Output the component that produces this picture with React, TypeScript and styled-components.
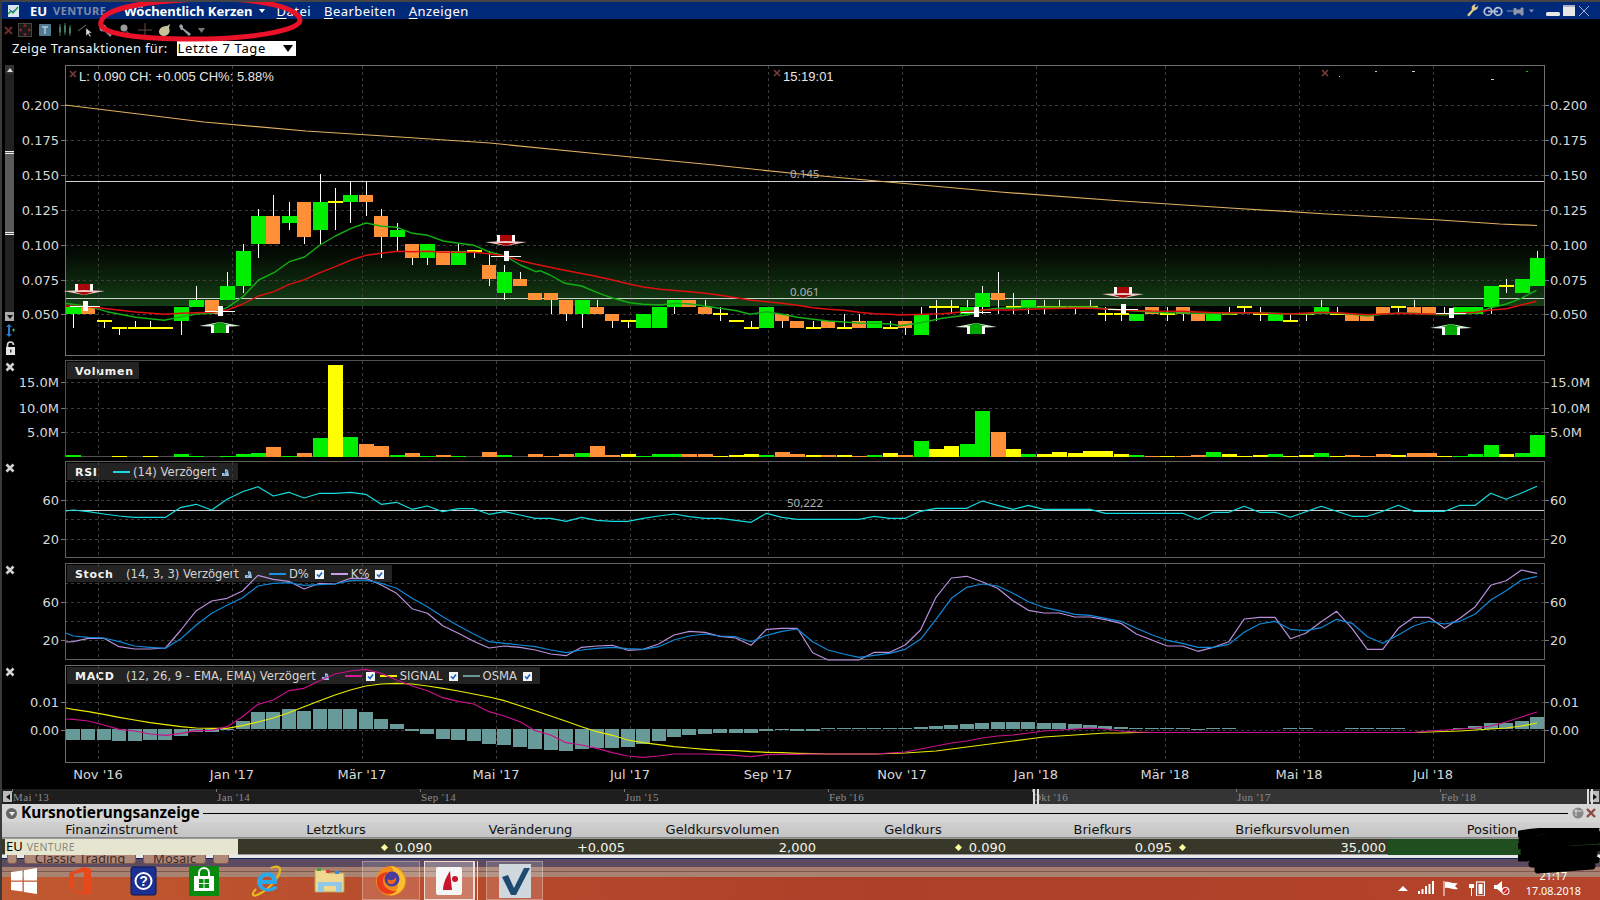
import React from 'react';
import styled, { createGlobalStyle } from 'styled-components';

const UI_FONT = '"Noto Sans", "DejaVu Sans", sans-serif';
const NUM_FONT = '"DejaVu Sans", "Liberation Sans", sans-serif';

const GlobalStyle = createGlobalStyle`
  html, body { margin: 0; padding: 0; background: #000; }
  * { box-sizing: border-box; }
`;

/* ---------- chart data ---------- */

type Kind = 'g' | 'o' | 'y';
type Candle = { k: Kind; t: number; b: number; h: number; l: number };
const c = (k: Kind, t: number, b = t, h = t, l = b): Candle => ({ k, t, b, h, l });

const CANDLES: Candle[] = [
  c('g', .055, .05, .055, .04), c('o', .055, .05), c('y', .045, .045, .045, .04), c('y', .04, .04, .04, .035),
  c('y', .04, .04, .045, .04), c('y', .04, .04, .045, .04), c('y', .04), c('g', .055, .045, .055, .035),
  c('g', .06, .055, .07, .055), c('o', .06, .05), c('g', .07, .06, .08, .06), c('g', .095, .07, .1, .065),
  c('g', .12, .1, .125, .09), c('o', .12, .1, .135, .1), c('g', .12, .115, .13, .11), c('o', .13, .105, .13, .1),
  c('g', .13, .11, .15, .1), c('y', .13, .13, .14, .11), c('g', .135, .13, .145, .115), c('o', .135, .13, .145, .12),
  c('o', .12, .105, .125, .09), c('g', .11, .105, .115, .095), c('o', .1, .09, .1, .085), c('g', .1, .09, .1, .085),
  c('o', .095, .085), c('g', .095, .085, .1, .085), c('y', .095, .095, .095, .09), c('o', .085, .075, .095, .07),
  c('g', .08, .065, .085, .06), c('o', .075, .07, .08, .07), c('o', .065, .06), c('o', .065, .06, .065, .05),
  c('o', .06, .05, .06, .045), c('g', .06, .05, .06, .04), c('o', .055, .05, .06, .05), c('o', .05, .045, .05, .04),
  c('y', .045, .045, .045, .04), c('g', .05, .04), c('g', .055, .04), c('g', .06, .055, .06, .05),
  c('o', .06, .055), c('o', .055, .05, .06, .05), c('y', .05, .05, .055, .045), c('y', .045),
  c('y', .04, .04, .045, .04), c('g', .055, .04), c('o', .05, .045, .05, .04), c('o', .045, .04),
  c('y', .04, .04, .045, .04), c('o', .045, .04), c('y', .04, .04, .05, .04), c('o', .045, .04, .05, .04),
  c('g', .045, .04), c('y', .04, .04, .045, .04), c('o', .045, .04, .045, .035), c('g', .05, .035, .055, .035),
  c('y', .055, .055, .06, .045), c('y', .055, .055, .06, .05), c('g', .055, .05, .06, .05), c('g', .065, .055, .07, .05),
  c('o', .065, .06, .08, .05), c('y', .055, .055, .065, .05), c('g', .06, .055, .06, .05), c('y', .055, .055, .06, .05),
  c('y', .055, .055, .06, .055), c('y', .055, .055, .055, .05), c('y', .055, .055, .06, .055), c('y', .05, .05, .055, .045),
  c('y', .05, .05, .05, .045), c('g', .05, .045), c('o', .055, .05), c('y', .05, .05, .055, .045),
  c('o', .055, .05, .055, .045), c('o', .05, .045), c('g', .05, .045), c('y', .05, .05, .055, .05),
  c('y', .055, .055, .055, .05), c('y', .05, .05, .055, .045), c('g', .05, .045), c('y', .045, .045, .05, .045),
  c('y', .05, .05, .05, .045), c('g', .055, .05, .06, .05), c('y', .05, .05, .055, .05), c('o', .05, .045),
  c('o', .05, .045), c('o', .055, .05), c('y', .055, .055, .055, .05), c('o', .055, .05, .06, .05),
  c('o', .055, .05), c('y', .05, .05, .055, .05), c('g', .055, .05), c('g', .055, .05),
  c('g', .07, .055, .07, .05), c('y', .07, .07, .075, .065), c('g', .075, .065), c('g', .09, .07, .095, .07),
];

const VOLUME = [
  2, 0, 0, .7, 0, .7, 0, 3, .7, 0, .7, 3, 4, 10, 1, 4, 19, 92, 20, 13, 11, 2, 4, 1, 2, 1, 0, 5, 2, 0, 3, 1,
  3, 4, 11, 2, 3, .7, 3, 3, 3, 3, .7, 2, 3, 2, 5, 3, 2, 2, 2, 1, 2, 4, 2, 16, 8, 11, 13, 46, 25, 8, 3, 3,
  5, 4, 6, 6, 3, 2, 1, .7, 1, 2, 5, 3, .7, 2, 3, 1, 2, 4, 1, 2, 1, 3, 2, 4, 4, 1, .7, 3, 12, 3, 4, 22,
];

const RSI = [
  ...[450, 455, 462, 468, 472, 472, 472, 442, 433, 450, 418, 395, 380, 408, 397, 414, 400, 400, 397, 403, 433, 427, 448, 438, 455, 446, 446, 463].map(z => 360 + z / 3),
  ...[155, 165, 175, 175, 184, 172, 181, 184, 184, 175, 168, 162, 170, 175, 175, 181, 187, 160, 172, 178, 178, 178, 178, 178,
    169, 175, 175, 154, 145, 145, 145, 123, 136, 148, 136, 148, 148, 148, 148, 160, 160, 160, 160, 160, 160, 178, 157, 157, 139, 157, 157, 172, 155, 139, 154, 169, 169, 154, 136, 154, 154, 154, 136, 136, 100, 118, 99, 79].map(z => 460 + z / 3),
];

const STOCH_K = [
  ...[245, 235, 235, 260, 267, 267, 264, 210, 152, 123, 115, 93, 46, 58, 64, 87, 70, 72, 55, 55, 75, 100, 146, 160, 197, 220, 244, 264, 258, 262, 270, 282, 287, 262, 258, 256, 271, 268, 252, 225, 214, 217, 229, 234, 256, 208, 205, 205].map(z => 560 + z / 3),
  ...[578, 600, 600, 600, 577, 577, 555, 510, 412, 354, 349, 365, 385, 422, 451, 459, 459, 471, 471, 479, 490, 522, 540, 558, 558, 574, 562, 545, 477, 472, 472, 536, 520, 485, 454, 505, 568, 568, 505, 472, 472, 505, 475, 440, 376, 362, 330, 340].map(z => 460 + z / 3),
];

const STOCH_D = [
  ...[228, 232, 234, 245, 258, 262, 265, 236, 195, 160, 136, 113, 78, 70, 68, 76, 74, 72, 62, 60, 70, 85, 115, 140, 170, 197, 222, 245, 250, 255, 260, 270, 278, 270, 265, 262, 266, 268, 260, 240, 228, 222, 228, 230, 245, 226, 214, 207].map(z => 560 + z / 3),
  ...[545, 570, 582, 592, 586, 580, 568, 538, 478, 415, 382, 372, 378, 400, 425, 442, 452, 463, 466, 475, 484, 505, 524, 541, 550, 562, 562, 553, 517, 492, 484, 508, 512, 503, 478, 490, 530, 550, 525, 498, 484, 492, 484, 462, 420, 392, 360, 349].map(z => 460 + z / 3),
];

const FLAT = Array(18).fill(732.5);
const MACD_LINE = [
  ...[478, 483, 495, 508, 513, 522, 526, 520, 512, 511, 500, 470, 433, 420, 392, 385, 362, 342, 333, 328, 340, 360, 378, 392, 413, 424, 432, 455, 468, 485, 512, 525, 548, 555, 565, 578, 588, 592, 588, 582, 582, 582, 583, 586, 590, 584, 583, 583, 582].map(z => 560 + z / 3),
  754, 754, 754, 754, 753, 752, 749, 746, 743, 741, 738, 736, 735, 733, 731, 730, 729, 728, 729, 731, 732,
  ...FLAT, 731, 730, 729, 728, 726, 722, 717, 712,
];
const MACD_SIGNAL = [
  ...[448, 455, 463, 472, 480, 488, 494, 500, 504, 505, 505, 497, 486, 474, 458, 440, 422, 405, 390, 378, 372, 370, 372, 378, 385, 393, 402, 411, 422, 437, 452, 468, 484, 500, 515, 526, 540, 548, 554, 560, 564, 568, 571, 572, 575, 577, 578, 580, 581].map(z => 560 + z / 3),
  754, 754, 754, 754, 753.5, 753, 752, 751, 749, 747, 745, 743, 741, 739, 737, 736, 735, 734, 733, 733, 732.5,
  ...FLAT, 732, 731.5, 731, 730, 729, 728, 726, 723,
];
const OSMA = [
  ...[540, 540, 540, 543, 543, 540, 540, 528, 517, 517, 509, 483, 456, 456, 447, 453, 447, 447, 447, 456, 477, 492, 513, 522, 537, 540, 543, 552, 555, 561, 567, 570, 573, 567, 564, 564, 561, 552, 543, 531, 525, 522, 519, 519, 519, 513, 510, 513, 513].map(z => (507 - z) / 3),
  .7, .7, .7, 1, 1, 1, 2, 3, 4, 5, 6, 7, 7, 7, 6.5, 6, 5, 4, 3, 2, .7, .7, 1, 1, -1, .7, .7, 0, 0, 0, .7, .7, 0, 0, .7, .7, .7, 1.5, 0, 0, 0, 1, 3, 6, 6, 8, 12,
];

type Pt = [number, number];
const mapPts = (pts: Pt[], x0: number, y0: number, sx: number): Pt[] => pts.map(([x, y]) => [x0 + x / sx, y0 + y / 3]);

const SMA_FAST: Pt[] = [
  ...mapPts([[183, 460], [250, 470], [300, 485], [380, 502], [460, 511], [508, 500], [550, 492], [594, 490], [637, 472], [680, 440], [724, 390], [767, 368], [810, 335], [853, 321], [896, 285], [939, 258], [983, 235], [1025, 219], [1068, 229], [1112, 232], [1155, 250], [1198, 256], [1241, 273], [1284, 280], [1327, 286], [1371, 306], [1414, 318], [1457, 345], [1500, 365]], 0, 150, 2.8),
  ...mapPts([[0, 2], [30, 15], [75, 40], [125, 48], [170, 67], [220, 85], [270, 98], [310, 103], [360, 105], [410, 100], [450, 102], [495, 108], [540, 115], [590, 122], [630, 133], [680, 125], [726, 133], [772, 142], [819, 148], [865, 153], [912, 156], [957, 159], [1003, 160], [1050, 162]], 540, 270, 3),
  ...mapPts([[0, 287], [50, 278], [100, 265], [160, 255], [196, 240], [233, 235], [269, 234], [342, 232], [416, 231], [452, 231], [490, 236], [526, 240], [562, 243], [598, 246], [635, 248], [672, 249], [745, 250], [782, 252], [818, 248], [855, 248], [892, 250], [928, 252], [965, 252], [1001, 250], [1038, 250], [1075, 253], [1110, 258], [1147, 253], [1184, 250], [1221, 250], [1257, 253], [1294, 254], [1331, 252], [1367, 250], [1404, 233], [1441, 222], [1476, 205], [1512, 181]], 900, 230, 2.376),
];
const SMA_SLOW: Pt[] = [
  ...mapPts([[183, 468], [250, 470], [300, 476], [380, 486], [460, 493], [508, 490], [550, 488], [594, 487], [637, 480], [680, 462], [724, 438], [767, 425], [810, 403], [853, 389], [896, 368], [939, 350], [983, 330], [1025, 316], [1068, 310], [1112, 304], [1155, 305], [1198, 304], [1241, 307], [1284, 307], [1327, 307], [1371, 311], [1414, 318], [1457, 332], [1500, 343]], 0, 150, 2.8),
  ...mapPts([[70, 0], [160, 17], [218, 30], [270, 43], [310, 51], [360, 58], [450, 65], [495, 70], [541, 76], [588, 83], [634, 91], [680, 95], [726, 100], [772, 106], [819, 113], [865, 118], [912, 121], [957, 127], [1003, 131], [1050, 133]], 540, 270, 3),
  ...mapPts([[0, 255], [100, 251], [196, 240], [233, 240], [269, 240], [342, 236], [416, 234], [452, 235], [526, 240], [598, 243], [672, 244], [745, 248], [818, 248], [855, 249], [928, 252], [1001, 247], [1038, 248], [1110, 254], [1184, 250], [1257, 252], [1294, 251], [1367, 247], [1404, 240], [1441, 236], [1476, 225], [1512, 214]], 900, 230, 2.376),
];
const SMA_LONG: Pt[] = [[65, 105], [204, 122], [306, 131], [400, 137], [490, 143], [600, 154], [714, 165], [800, 174], [888, 182], [1000, 192], [1122, 201], [1230, 208], [1327, 214], [1440, 220], [1500, 224], [1537, 225.5]];

const MONTHS: [number, string][] = [
  [98, "Nov '16"], [232, "Jan '17"], [362, "Mär '17"], [496, "Mai '17"], [630, "Jul '17"], [768, "Sep '17"],
  [902, "Nov '17"], [1036, "Jan '18"], [1165, "Mär '18"], [1299, "Mai '18"], [1433, "Jul '18"],
];

const SLIDER_LABELS = ["Mai '13", "Jan '14", "Sep '14", "Jun '15", "Feb '16", "Okt '16", "Jun '17", "Feb '18"];

const COLORS: Record<Kind, string> = { g: '#00ee00', o: '#ff9038', y: '#ffff00' };
const xAt = (i: number) => 73 + 15.41 * i;
const yPrice = (p: number) => 314 - (p - 0.05) * 1396;
const toPoints = (pts: Pt[]) => pts.map(([x, y]) => `${x.toFixed(1)},${y.toFixed(1)}`).join(' ');
const series = (ys: number[]): Pt[] => ys.map((y, i) => [xAt(i), y]);

/* ---------- layout ---------- */

const Page = styled.div`
  position: relative;
  width: 1600px;
  height: 900px;
  overflow: hidden;
  background: #000;
  border-top: 2px solid #444;
  border-left: 2px solid #3a3a3a;
  font-family: ${UI_FONT};
`;

const TitleBar = styled.div`
  display: flex;
  align-items: center;
  height: 17px;
  margin-bottom: 1px;
  background: #00297a;
  color: #fff;
  font-size: 13px;
`;

const TitleLeft = styled.div`
  display: flex;
  align-items: center;
  width: 122px;
  padding-left: 6px;
`;

const Symbol = styled.span`
  margin-left: 11px;
  font-weight: 700;
`;

const Exchange = styled.span`
  margin-left: 6px;
  font-size: 11px;
  font-weight: 700;
  color: #7f8aa8;
  letter-spacing: 0.4px;
`;

const ChartTitle = styled.span`
  font-weight: 700;
`;

const MenuCaret = styled.span`
  width: 0;
  height: 0;
  margin: 0 12px 0 6px;
  border-left: 3.5px solid transparent;
  border-right: 3.5px solid transparent;
  border-top: 4px solid #fff;
`;

const MenuItem = styled.span`
  margin-right: 13px;
  letter-spacing: 0.45px;

  u { text-underline-offset: 2px; }
`;

const TitleRight = styled.div`
  display: flex;
  align-items: center;
  margin-left: auto;
  padding-right: 7px;
`;

const Toolbar = styled.div`
  display: flex;
  align-items: center;
  height: 20px;
`;

const ToolSlot = styled.div<{ $w?: number }>`
  display: flex;
  align-items: center;
  justify-content: center;
  width: ${p => p.$w ?? 20}px;
  height: 20px;
`;

const FilterRow = styled.div`
  display: flex;
  align-items: center;
  height: 16px;
  padding-left: 10px;
  color: #f0f0f0;
  font-size: 13px;
  letter-spacing: 0.3px;
`;

const FilterSelect = styled.div`
  display: flex;
  align-items: center;
  justify-content: space-between;
  width: 119px;
  height: 15px;
  margin-left: 9px;
  padding: 0 3px 0 1px;
  background: #fff;
  color: #000;
  letter-spacing: 0.65px;
`;

const SelectCaret = styled.span`
  width: 0;
  height: 0;
  border-left: 5px solid transparent;
  border-right: 5px solid transparent;
  border-top: 7px solid #000;
`;

const ChartStack = styled.div`
  display: flex;
  flex-direction: column;
  gap: 4px;
  margin-top: 9px;
`;

const Panel = styled.section<{ $h: number }>`
  position: relative;
  width: 1598px;
  height: ${p => p.$h}px;
`;

const PlotSvg = styled.svg`
  position: relative;
  z-index: 1;
  display: block;
  width: 100%;
  height: 100%;
`;

const AxisText = styled.text`
  font-family: ${NUM_FONT};
  font-size: 13px;
  fill: #d8d8d8;
`;

const FloatText = styled.text`
  font-family: ${UI_FONT};
  font-size: 11.5px;
  fill: #b0b0b0;
`;

const ReadoutText = styled.text`
  font-family: "Liberation Sans", Arial, sans-serif;
  font-size: 13px;
  fill: #e6e6e6;
`;

const CloseMark = styled.svg`
  position: absolute;
  z-index: 2;
  left: 3px;
  top: 2px;
  width: 10px;
  height: 10px;
`;

const Legend = styled.div`
  position: absolute;
  z-index: 0;
  left: 65px;
  top: 2px;
  display: flex;
  align-items: center;
  height: 17px;
  padding: 1px 8px 0;
  background: #232323;
  color: #d4d4d4;
  font-family: ${NUM_FONT};
  font-size: 11.6px;
`;

const LegendName = styled.b<{ $w: number }>`
  width: ${p => p.$w}px;
  color: #f2f2f2;
  font-size: 11px;
  letter-spacing: 0.7px;
`;

const LegendDash = styled.i<{ $color: string; $ml?: number }>`
  display: block;
  width: 17px;
  height: 2px;
  margin: 0 3px 0 ${p => p.$ml ?? 5}px;
  background: ${p => p.$color};
`;

const LegendCheck = styled.svg<{ $ml?: number }>`
  width: 9px;
  height: 9px;
  margin-left: ${p => p.$ml ?? 6}px;
`;

const LegendGear = styled.svg`
  width: 9px;
  height: 9px;
  margin-left: 5px;
`;

const ScrollRail = styled.div`
  position: absolute;
  z-index: 2;
  left: 3px;
  top: 0;
  display: flex;
  flex-direction: column;
  align-items: center;
  width: 9px;
  height: 256px;
  background: #222;
`;

const RailButton = styled.div<{ $down?: boolean }>`
  display: flex;
  align-items: center;
  justify-content: center;
  width: 9px;
  height: 9px;
  background: ${p => (p.$down ? '#aaa' : '#333')};

  &::after {
    content: '';
    border-left: 3px solid transparent;
    border-right: 3px solid transparent;
    ${p => (p.$down ? 'border-top: 4px solid #111;' : 'border-bottom: 4px solid #ddd;')}
  }
`;

const RailThumb = styled.div`
  width: 9px;
  height: 84px;
  margin-top: 77px;
  margin-bottom: auto;
  background: #5a5a5a;
  border-top: 3px double #eee;
  border-bottom: 3px double #eee;
`;

const RailExtras = styled.div`
  position: absolute;
  z-index: 2;
  left: 2px;
  top: 258px;
  display: flex;
  flex-direction: column;
  align-items: center;
  gap: 3px;
  width: 12px;
`;

const TimeAxis = styled.svg`
  display: block;
  width: 1598px;
  height: 26px;
`;

const Slider = styled.div`
  position: relative;
  display: grid;
  grid-template-columns: 10px repeat(8, 204px);
  height: 15px;
  color: #8c8c8c;
  background: linear-gradient(90deg, #1e1e1e 0, #1e1e1e 1033px, #343434 1033px, #343434 100%);
  font-family: "Liberation Serif", serif;
  font-size: 11px;
  line-height: 17px;
`;

const SliderLabel = styled.span`
  position: relative;
  padding-left: 1px;
  letter-spacing: 0.4px;
  white-space: nowrap;

  &::before {
    content: '';
    position: absolute;
    left: 0;
    top: 0;
    width: 1px;
    height: 3px;
    background: #777;
  }
`;

const SliderArrow = styled.i<{ $right?: boolean }>`
  position: absolute;
  top: 2px;
  ${p => (p.$right ? 'right: 1px;' : 'left: 1px;')}
  display: flex;
  align-items: center;
  justify-content: center;
  width: 9px;
  height: 11px;
  background: #bbb;

  &::after {
    content: '';
    border-top: 3px solid transparent;
    border-bottom: 3px solid transparent;
    ${p => (p.$right ? 'border-left: 4px solid #111;' : 'border-right: 4px solid #111;')}
  }
`;

const SliderHandle = styled.i<{ $left: number }>`
  position: absolute;
  top: 0;
  left: ${p => p.$left}px;
  width: 6px;
  height: 15px;
  border-left: 2px solid #ddd;
  border-right: 2px solid #ddd;
`;

const QuotePanel = styled.section`
  height: 51px;
  background: #d6d6d6;
`;

const QuoteTitle = styled.div`
  display: flex;
  align-items: center;
  height: 18px;
  padding: 0 3px 0 4px;
  color: #000;
`;

const CollapseDot = styled.span`
  display: flex;
  align-items: center;
  justify-content: center;
  width: 11px;
  height: 11px;
  margin-right: 4px;
  border-radius: 50%;
  background: #666;

  &::after {
    content: '';
    margin-top: 2px;
    border-left: 3px solid transparent;
    border-right: 3px solid transparent;
    border-top: 4px solid #eee;
  }
`;

const QuoteHeading = styled.h2`
  margin: 0 0 1px;
  font-family: ${UI_FONT};
  font-size: 15.4px;
  font-weight: 700;
  line-height: 16px;
  white-space: nowrap;
`;

const TitleRule = styled.div`
  flex: 1;
  height: 1px;
  margin: 0 3px;
  background: #000;
`;

const QuoteRow = styled.div`
  display: grid;
  grid-template-columns: 233px 196px 193px 191px 190px 189px 191px 208px;
  padding-left: 3px;
`;

const HeaderRow = styled(QuoteRow)`
  height: 16px;
  background: linear-gradient(#d0d0d0, #c4c4c4);
  border-bottom: 1px solid #888;
`;

const HeaderCell = styled.div`
  color: #111;
  font-family: ${NUM_FONT};
  font-size: 13px;
  line-height: 15px;
  text-align: center;
`;

const DataRow = styled(QuoteRow)`
  height: 17px;
  background: #38382a;
  border-top: 1px solid #999;
  border-bottom: 1px solid #999;
`;

const NameCell = styled.div`
  padding-left: 1px;
  background: #e6e6d0;
  color: #000;
  font-family: ${UI_FONT};
  font-size: 13px;
  line-height: 15px;
`;

const NameExchange = styled.span`
  margin-left: 4px;
  color: #8a8a7a;
  font-size: 10.5px;
  letter-spacing: 0.3px;
`;

const DataCell = styled.div<{ $pr?: number; $bg?: string }>`
  display: flex;
  align-items: center;
  justify-content: flex-end;
  gap: 8px;
  padding-right: ${p => p.$pr ?? 2}px;
  background: ${p => p.$bg ?? 'transparent'};
  color: #f4f4e8;
  font-family: ${NUM_FONT};
  font-size: 13px;
  line-height: 15px;
`;

const Diamond = styled.i`
  width: 5px;
  height: 5px;
  background: #ffffa0;
  transform: rotate(45deg);
`;

const WindowEdge = styled.div`
  height: 5px;
  background: linear-gradient(#e8e8e8 0, #e8e8e8 3px, #12245c 3px, #12245c 4px, #5c4a60 4px);
`;

const Taskbar = styled.footer`
  position: relative;
  display: flex;
  height: 40px;
  background:
    linear-gradient(#5c4a60 0, #5c4a60 7px, #a87f6e 7px, #a87f6e 11px, #7c5a4c 11px, #7c5a4c 12px, #a98372 12px, #a98372 17px, transparent 17px),
    linear-gradient(90deg, #c05a30, #b84c2c 25%, #ae3f29 55%, #b4442a);
`;

const WindowTabs = styled.div`
  position: absolute;
  left: 5px;
  top: -5px;
  display: flex;
  gap: 7px;
  height: 9px;
  overflow: hidden;
  color: #3a2a28;
  font-family: ${UI_FONT};
  font-size: 13px;
  line-height: 6px;
`;

const WindowTab = styled.span<{ $w: number }>`
  width: ${p => p.$w}px;
  background: #b08878;
  border: 1px solid #7a5c50;
  border-top: 0;
  border-radius: 0 0 3px 3px;
  text-align: center;
`;

const TaskSlot = styled.div<{ $w: number; $state?: 'open' | 'active'; $ml?: number }>`
  display: flex;
  align-items: center;
  justify-content: center;
  width: ${p => p.$w}px;
  height: 39px;
  margin-top: 1px;
  margin-left: ${p => p.$ml ?? 0}px;
  ${p => p.$state === 'open' && 'border: 1px solid rgba(255,255,255,.3); background: rgba(255,255,255,.14);'}
  ${p => p.$state === 'active' && 'border: 1px solid #f0dcd4; background: rgba(255,255,255,.28);'}
`;

const StackEdge = styled.i`
  width: 4px;
  height: 39px;
  margin-top: 1px;
  border-right: 1px solid #f0dcd4;
  border-left: 1px solid #f0dcd4;
`;

const Tray = styled.div`
  display: flex;
  align-items: center;
  margin-left: auto;
  padding: 15px 19px 0 0;
  color: #fff;
`;

const TrayIcon = styled.svg<{ $w: number }>`
  display: block;
  width: ${p => p.$w}px;
  height: 16px;
  margin-right: 9.5px;
`;

const Clock = styled.div`
  display: flex;
  flex-direction: column;
  align-items: center;
  margin-left: 6px;
  margin-top: -10px;
  font-family: ${UI_FONT};
  font-size: 10.8px;
  line-height: 15px;
`;

const Overlay = styled.svg`
  position: absolute;
  z-index: 5;
  pointer-events: none;
`;

const Ellipse = styled(Overlay)`
  left: 87px;
  top: -2px;
  width: 220px;
  height: 46px;
`;

const Scribble = styled(Overlay)`
  right: 0;
  bottom: 26px;
  width: 82px;
  height: 46px;
`;

/* ---------- small drawings ---------- */

const Grid = ({ ys, top, bottom }: { ys: number[]; top: number; bottom: number }) => (
  <g stroke="#3c3c3c" strokeWidth="1" strokeDasharray="3 3" shapeRendering="crispEdges">
    {MONTHS.map(([x]) => <line key={x} x1={x} x2={x} y1={top} y2={bottom} />)}
    {ys.map(y => <line key={y} x1="65" x2="1545" y1={y} y2={y} />)}
  </g>
);

const Frame = ({ top, bottom, color = '#6c6c6c' }: { top: number; bottom: number; color?: string }) => (
  <rect x="65.5" y={top + 0.5} width="1479" height={bottom - top - 1} fill="none" stroke={color} shapeRendering="crispEdges" />
);

const Ticks = ({ rows, left = true }: { rows: [number, string][]; left?: boolean }) => (
  <>
    {rows.map(([y, label]) => (
      <g key={label}>
        {left && <AxisText x="59" y={y + 5} textAnchor="end">{label}</AxisText>}
        <AxisText x="1550" y={y + 5}>{label}</AxisText>
        <line x1="61" x2="65" y1={y} y2={y} stroke="#777" shapeRendering="crispEdges" />
        <line x1="1545" x2="1549" y1={y} y2={y} stroke="#777" shapeRendering="crispEdges" />
      </g>
    ))}
  </>
);

const SmallX = ({ x, y }: { x: number; y: number }) => (
  <path d={`M${x - 3} ${y - 3}L${x + 3} ${y + 3}M${x + 3} ${y - 3}L${x - 3} ${y + 3}`} stroke="#7a3c3c" strokeWidth="1.6" />
);

const SellArrow = ({ x, y }: { x: number; y: number }) => (
  <g>
    <rect x={x - 9} y={y} width="18" height="8" fill="#fff" />
    <rect x={x - 6} y={y} width="12" height="9" fill="#a80808" />
    <polygon points={`${x - 21},${y + 7} ${x},${y + 6} ${x + 21},${y + 7} ${x},${y + 11}`} fill="#f2c8c8" />
    <polygon points={`${x - 9},${y + 8} ${x + 9},${y + 8} ${x},${y + 11}`} fill="#a80808" />
  </g>
);

const BuyArrow = ({ x, y }: { x: number; y: number }) => (
  <g>
    <polygon points={`${x - 21},${y + 4} ${x},${y} ${x + 21},${y + 4} ${x},${y + 5}`} fill="#d8f0d8" />
    <polygon points={`${x - 9},${y + 3} ${x + 9},${y + 3} ${x},${y}`} fill="#00a000" />
    <rect x={x - 9} y={y + 3} width="18" height="8" fill="#fff" />
    <rect x={x - 6} y={y + 3} width="12" height="8" fill="#00a800" />
  </g>
);

const CrossMark = ({ x, y }: { x: number; y: number }) => (
  <g fill="#fff" shapeRendering="crispEdges">
    <rect x={x - 15} y={y - 0.5} width="30" height="1" />
    <rect x={x - 2} y={y - 5} width="5" height="10" />
  </g>
);

const CloseX = () => (
  <CloseMark viewBox="0 0 10 10">
    <path d="M1.5 1.5L8.5 8.5M8.5 1.5L1.5 8.5" stroke="#d2d2d2" strokeWidth="2.6" />
  </CloseMark>
);

const Check = ({ ml }: { ml?: number }) => (
  <LegendCheck viewBox="0 0 9 9" $ml={ml}>
    <rect width="9" height="9" fill="#f4f4f4" />
    <path d="M2 4.5L4 6.5L7 2.5" fill="none" stroke="#1a62c8" strokeWidth="1.6" />
  </LegendCheck>
);

const Gear = () => (
  <LegendGear viewBox="0 0 9 9">
    <path d="M1 8L1 5L4 5L4 1L7 2L8 8Z" fill="#9cc0e0" />
    <path d="M3 7L6 3" stroke="#3a6a9a" />
  </LegendGear>
);

const TrendLine = ({ pts, color, width = 1.2 }: { pts: Pt[]; color: string; width?: number }) => (
  <polyline points={toPoints(pts)} fill="none" stroke={color} strokeWidth={width} strokeLinejoin="round" />
);

/* ---------- chart panels ---------- */

const MainChart = () => (
  <Panel $h={291}>
    <PlotSvg viewBox="2 65 1598 291">
      <defs>
        <linearGradient id="priceGlow" x1="0" x2="0" y1="0" y2="1">
          <stop offset="0" stopColor="#133a13" stopOpacity="0" />
          <stop offset="1" stopColor="#153f15" />
        </linearGradient>
      </defs>
      <rect x="66" y="240" width="1478" height="66" fill="url(#priceGlow)" />
      <Grid ys={[105, 140, 175, 210, 245, 280, 314]} top={66} bottom={355} />
      <Frame top={65} bottom={356} color="#707070" />
      <Ticks rows={[[105, '0.200'], [140, '0.175'], [175, '0.150'], [210, '0.125'], [245, '0.100'], [280, '0.075'], [314, '0.050']]} />
      <line x1="66" x2="1544" y1="181.5" y2="181.5" stroke="#d0d0d0" shapeRendering="crispEdges" />
      <line x1="66" x2="1544" y1="298.5" y2="298.5" stroke="#d0d0d0" shapeRendering="crispEdges" />
      <FloatText x="790" y="178">0.145</FloatText>
      <FloatText x="790" y="296">0.061</FloatText>
      {CANDLES.map((d, i) => {
        const x = Math.round(xAt(i));
        return (
          <g key={i} shapeRendering="crispEdges">
            <line x1={x + 0.5} x2={x + 0.5} y1={yPrice(d.h)} y2={yPrice(d.l)} stroke="#fff" />
            {d.k === 'y'
              ? <rect x={x - 7} y={yPrice(d.t) - 1} width="15" height="2" fill={COLORS.y} />
              : <rect x={x - 7} y={yPrice(d.t)} width={d.k === 'g' ? 15 : 14} height={yPrice(d.b) - yPrice(d.t)} fill={COLORS[d.k]} />}
          </g>
        );
      })}
      <TrendLine pts={SMA_LONG} color="#e0b060" />
      <TrendLine pts={SMA_FAST} color="#12b012" width={1.4} />
      <TrendLine pts={SMA_SLOW} color="#e01010" width={1.4} />
      <SellArrow x={84} y={284} />
      <SellArrow x={506} y={235} />
      <SellArrow x={1123} y={287} />
      <BuyArrow x={220} y={322} />
      <BuyArrow x={976} y={323} />
      <BuyArrow x={1451} y={324} />
      <CrossMark x={85} y={306} />
      <CrossMark x={220} y={311} />
      <CrossMark x={506} y={256} />
      <CrossMark x={976} y={312} />
      <CrossMark x={1123} y={309} />
      <CrossMark x={1451} y={313} />
      <SmallX x={73} y={74} />
      <ReadoutText x="79" y="81">L: 0.090 CH: +0.005 CH%: 5.88%</ReadoutText>
      <SmallX x={777} y={73} />
      <ReadoutText x="783" y="81">15:19:01</ReadoutText>
      <SmallX x={1325} y={73} />
      <g fill="#ccc">
        <rect x="1339" y="76" width="1" height="1" />
        <rect x="1375" y="71" width="2" height="1" />
        <rect x="1412" y="71" width="3" height="1" />
        <rect x="1491" y="79" width="3" height="1" />
        <rect x="1526" y="71" width="2" height="1" fill="#0c0" />
      </g>
    </PlotSvg>
    <ScrollRail>
      <RailButton />
      <RailThumb />
      <RailButton $down />
    </ScrollRail>
    <RailExtras>
      <svg width="10" height="15" viewBox="0 0 10 15">
        <path d="M4 1L1 4H3V11H1L4 14L7 11H5V4H7Z" fill="#2a7ad0" />
        <path d="M7 7H10M8.5 5.5V8.5" stroke="#20c080" />
      </svg>
      <svg width="11" height="14" viewBox="0 0 11 14">
        <path d="M2.5 6V4A3 3 0 0 1 8.500 4" fill="none" stroke="#ddd" strokeWidth="1.6" />
        <rect x="1" y="6" width="9" height="8" fill="#e4e4e4" />
        <rect x="5" y="8.500" width="1.500" height="3" fill="#333" />
      </svg>
    </RailExtras>
  </Panel>
);

const VolumeChart = () => (
  <Panel $h={97}>
    <Legend><LegendName $w={56}>Volumen</LegendName></Legend>
    <PlotSvg viewBox="2 360 1598 97">
      <Grid ys={[382, 408, 432]} top={361} bottom={456} />
      <Frame top={360} bottom={457} color="#505050" />
      <Ticks rows={[[382, '15.0M'], [408, '10.0M'], [432, '5.0M']]} />
      <g shapeRendering="crispEdges">
        {VOLUME.map((v, i) => v > 0 && (
          <rect key={i} x={Math.round(xAt(i)) - 7} y={456.5 - v} width="15" height={v} fill={COLORS[CANDLES[i].k]} />
        ))}
      </g>
    </PlotSvg>
    <CloseX />
  </Panel>
);

const RsiChart = () => (
  <Panel $h={98}>
    <Legend>
      <LegendName $w={28}>RSI</LegendName>
      <LegendDash $color="#19d8e0" $ml={10} />
      (14) Verzögert
      <Gear />
    </Legend>
    <PlotSvg viewBox="2 461 1598 98">
      <Grid ys={[481, 500, 519, 539]} top={462} bottom={558} />
      <Frame top={461} bottom={558} color="#606060" />
      <Ticks rows={[[500, '60'], [539, '20']]} />
      <line x1="66" x2="1544" y1="510.500" y2="510.500" stroke="#d0d0d0" shapeRendering="crispEdges" />
      <FloatText x="787" y="507">50,222</FloatText>
      <TrendLine pts={[[66, 511], ...series(RSI)]} color="#14dce0" />
    </PlotSvg>
    <CloseX />
  </Panel>
);

const StochChart = () => (
  <Panel $h={98}>
    <Legend>
      <LegendName $w={51}>Stoch</LegendName>
      (14, 3, 3) Verzögert
      <Gear />
      <LegendDash $color="#1890e8" $ml={16} />
      D%
      <Check />
      <LegendDash $color="#c8a0e8" $ml={7} />
      K%
      <Check />
    </Legend>
    <PlotSvg viewBox="2 563 1598 98">
      <Grid ys={[583, 602, 621, 640]} top={564} bottom={660} />
      <Frame top={563} bottom={660} color="#606060" />
      <Ticks rows={[[602, '60'], [640, '20']]} />
      <TrendLine pts={[[66, 642], ...series(STOCH_K)]} color="#b890dc" />
      <TrendLine pts={[[66, 633], ...series(STOCH_D)]} color="#1088d8" />
    </PlotSvg>
    <CloseX />
  </Panel>
);

const MacdChart = () => (
  <Panel $h={98}>
    <Legend>
      <LegendName $w={51}>MACD</LegendName>
      (12, 26, 9 - EMA, EMA) Verzögert
      <Gear />
      <LegendDash $color="#d81898" $ml={15} />
      <Check ml={1} />
      <LegendDash $color="#f0f000" />
      SIGNAL
      <Check />
      <LegendDash $color="#689a9a" />
      OSMA
      <Check />
    </Legend>
    <PlotSvg viewBox="2 665 1598 98">
      <Grid ys={[702, 730]} top={666} bottom={762} />
      <Frame top={665} bottom={763} color="#6c6c6c" />
      <Ticks rows={[[702, '0.01'], [730, '0.00']]} />
      <g shapeRendering="crispEdges">
        {OSMA.map((v, i) => v !== 0 && (
          <rect key={i} x={Math.round(xAt(i)) - 7} y={v > 0 ? 729 - v : 729} width="14" height={Math.abs(v)} fill="#689a9a" />
        ))}
      </g>
      <TrendLine pts={[[66, 708], ...series(MACD_SIGNAL)]} color="#eaea00" />
      <TrendLine pts={[[66, 719], ...series(MACD_LINE)]} color="#c8108c" />
    </PlotSvg>
    <CloseX />
  </Panel>
);

/* ---------- top bar icons ---------- */

const AppIcon = () => (
  <svg width="11" height="12" viewBox="0 0 11 12">
    <rect width="11" height="12" fill="#d8e4ee" />
    <path d="M0 9L3 6L5 8L10 2" fill="none" stroke="#1c9c3c" strokeWidth="1.5" />
    <path d="M1 4L4 7L7 5" fill="none" stroke="#2060c0" />
  </svg>
);

const WindowControls = () => (
  <svg width="130" height="17" viewBox="0 0 130 17">
    <path d="M4 13L9 7.500C8 5 9.500 2.500 13 2L11.500 4.500L13 5.500L15 3.500C15.500 6 13.500 8.500 11 8.500L6 14.500Z" fill="#e2c98c" />
    <g fill="none" stroke="#b6bed2" strokeWidth="1.800">
      <circle cx="25" cy="9.500" r="3.800" />
      <circle cx="35" cy="9.500" r="3.800" />
      <path d="M25 9.500H35" />
    </g>
    <path d="M44 9H51M51 6.500H53V8H58V6H60V13H58V11H53V12.500H51Z" fill="#8e98a8" stroke="#8e98a8" />
    <path d="M66 7.500H71L68.500 10.500Z" fill="#8794b0" />
    <rect x="83" y="10" width="14" height="4" rx="1.500" fill="#e8e8e8" />
    <rect x="100" y="3" width="12" height="11" fill="#e6e6e6" />
    <rect x="100" y="3" width="12" height="2" fill="#aab0c0" />
    <path d="M116 4L126 14M126 4L116 14" stroke="#a8b0c8" strokeWidth="1" />
  </svg>
);

const ToolIcons = () => (
  <>
    <ToolSlot $w={13}><svg width="9" height="9" viewBox="0 0 9 9"><path d="M1 1L8 8M8 1L1 8" stroke="#6a2c2c" strokeWidth="2" /></svg></ToolSlot>
    <ToolSlot>
      <svg width="14" height="14" viewBox="0 0 14 14">
        <rect x=".5" y=".5" width="13" height="13" fill="#1a1a1a" stroke="#444" />
        <path d="M7 1L5 3.500H9ZM7 13L5 10.500H9ZM1 7L3.500 5V9ZM13 7L10.500 5V9Z" fill="#a02c2c" />
      </svg>
    </ToolSlot>
    <ToolSlot>
      <svg width="12" height="12" viewBox="0 0 12 12">
        <rect width="12" height="12" rx="1" fill="#4e7a92" />
        <path d="M3 3H9M6 3V10" stroke="#b4ccda" strokeWidth="1.500" />
      </svg>
    </ToolSlot>
    <ToolSlot>
      <svg width="14" height="14" viewBox="0 0 14 14" stroke="#3f7c60" fill="none">
        <path d="M2 1V13M7 0V12M12 2V13" />
        <rect x="1.500" y="4" width="1" height="5" fill="#3f7c60" />
        <rect x="6.500" y="3" width="1" height="6" fill="#3f7c60" />
        <rect x="11.500" y="5" width="1" height="5" fill="#3f7c60" />
      </svg>
    </ToolSlot>
    <ToolSlot>
      <svg width="14" height="14" viewBox="0 0 14 14">
        <path d="M0 8L8 2" stroke="#777" />
        <path d="M8 5V13L10 11L12 14L13 13L11 10L14 10Z" fill="#ddd" stroke="#222" strokeWidth=".5" />
      </svg>
    </ToolSlot>
    <ToolSlot>
      <svg width="14" height="14" viewBox="0 0 14 14">
        <circle cx="5" cy="5" r="3.500" fill="#999" />
        <path d="M7 7L13 13" stroke="#888" strokeWidth="2.500" />
      </svg>
    </ToolSlot>
    <ToolSlot>
      <svg width="14" height="14" viewBox="0 0 14 14">
        <circle cx="6" cy="5" r="3.500" fill="#9a9a9a" />
        <path d="M8 8L12 12" stroke="#444" strokeWidth="2" />
      </svg>
    </ToolSlot>
    <ToolSlot>
      <svg width="14" height="14" viewBox="0 0 14 14">
        <path d="M7 0V14M0 7H14" stroke="#6a4c40" />
      </svg>
    </ToolSlot>
    <ToolSlot>
      <svg width="14" height="14" viewBox="0 0 14 14">
        <path d="M1 9C1 5 5 3 9 3L12 1L11 5C13 9 10 13 6 13C3 13 1 11 1 9Z" fill="#c8c49a" />
      </svg>
    </ToolSlot>
    <ToolSlot>
      <svg width="14" height="14" viewBox="0 0 14 14">
        <path d="M1 3L3 1L5 3L5 5L13 11L11 13L5 7L3 7Z" fill="#9aa0a8" />
      </svg>
    </ToolSlot>
    <ToolSlot $w={12}>
      <svg width="7" height="5" viewBox="0 0 7 5"><path d="M0 0H7L3.500 5Z" fill="#777" /></svg>
    </ToolSlot>
  </>
);

/* ---------- taskbar icons ---------- */

const WindowsLogo = () => (
  <svg width="26" height="26" viewBox="0 0 26 26" fill="#fff">
    <path d="M0 4L11.500 2.500V12.500H0ZM12.800 2.300L26 0V12.500H12.800ZM0 13.800H11.500V23.500L0 22ZM12.800 13.800H26V26L12.800 24Z" />
  </svg>
);

const OfficeLogo = () => (
  <svg width="24" height="28" viewBox="0 0 24 28">
    <path d="M1 6L16 0L23 2V26L16 28L1 23L16 25V5L6 7V20L1 23Z" fill="#e8491c" />
  </svg>
);

const HelpLogo = () => (
  <svg width="27" height="30" viewBox="0 0 27 30">
    <rect x="1" y="1" width="25" height="28" rx="2" fill="#1c2f92" stroke="#0b1850" />
    <circle cx="13.500" cy="15" r="8" fill="none" stroke="#fff" strokeWidth="2" />
    <text x="13.500" y="20" textAnchor="middle" fontFamily="Liberation Sans" fontWeight="700" fontSize="14" fill="#fff">?</text>
  </svg>
);

const StoreLogo = () => (
  <svg width="30" height="30" viewBox="0 0 30 30">
    <rect width="30" height="30" fill="#078a0e" />
    <path d="M5 10H25V25H5Z" fill="#fff" />
    <path d="M10 10V7A5 5 0 0 1 20 7V10" fill="none" stroke="#fff" strokeWidth="2" />
    <path d="M10 13H14.500V17H10ZM15.500 13H20V17H15.500ZM10 18H14.500V22H10ZM15.500 18H20V22H15.500Z" fill="#078a0e" />
  </svg>
);

const IeLogo = () => (
  <svg width="32" height="32" viewBox="0 0 32 32">
    <path d="M5 24C-1 30 2 33 10 28C18 24 30 11 29 4C28 1 24 1 20 3" fill="none" stroke="#e8b820" strokeWidth="2.200" />
    <path d="M24 19H11C12 24 19 25 23 21L27 22C23 29 8 28 6 18C5 8 20 3 25 12C26 14 26 16 26 19ZM11 15H21C20 10 13 10 11 15Z" fill="#2ca8e8" />
  </svg>
);

const FolderLogo = () => (
  <svg width="32" height="30" viewBox="0 0 32 30">
    <path d="M1 4H12L14 7H30V26H1Z" fill="#f0d890" stroke="#b89c58" />
    <rect x="3" y="2" width="4" height="3" fill="#3fa04c" />
    <rect x="12" y="4" width="4" height="3" fill="#d84030" />
    <rect x="21" y="5" width="4" height="3" fill="#3a8ad8" />
    <path d="M4 16H28V26H22V20H10V26H4Z" fill="#90c8e8" />
  </svg>
);

const FirefoxLogo = () => (
  <svg width="32" height="32" viewBox="0 0 32 32">
    <circle cx="16" cy="16" r="15" fill="#f08a1c" />
    <path d="M16 1C26 3 31 11 30 18C29 26 21 31 14 30C20 28 24 24 23 19C20 22 14 20 13 16C18 17 21 13 20 9C19 6 17 3 16 1Z" fill="#f8c030" />
    <circle cx="17" cy="14" r="7.500" fill="#4a3c9c" />
    <path d="M13 14C15 16 19 16 21 12C22 16 19 20 15 19C13 19 12 16 13 14Z" fill="#f0681c" />
    <path d="M2 13C6 8 10 6 14 8C10 9 8 12 8 16C8 22 14 27 22 26C14 32 3 28 2 18Z" fill="#e8391c" />
  </svg>
);

const BrokerLogo = () => (
  <svg width="28" height="30" viewBox="0 0 28 30">
    <rect x="1" y="1" width="26" height="28" rx="2" fill="#f6f6f6" />
    <path d="M15 5L17 24H8C8 18 11 11 15 5Z" fill="#c8142c" />
    <circle cx="20" cy="13" r="3" fill="#c8142c" />
  </svg>
);

const CheckLogo = () => (
  <svg width="32" height="34" viewBox="0 0 32 34">
    <rect width="32" height="34" fill="#cfd8dc" />
    <path d="M3 13L9 11L15 24L25 4H31L17 31H12Z" fill="#1f4a70" />
  </svg>
);

const App: React.FC = () => (
  <>
    <GlobalStyle />
    <Page>
      <TitleBar>
        <TitleLeft>
          <AppIcon />
          <Symbol>EU</Symbol>
          <Exchange>VENTURE</Exchange>
        </TitleLeft>
        <ChartTitle>Wöchentlich Kerzen</ChartTitle>
        <MenuCaret />
        <MenuItem><u>D</u>atei</MenuItem>
        <MenuItem><u>B</u>earbeiten</MenuItem>
        <MenuItem><u>A</u>nzeigen</MenuItem>
        <TitleRight><WindowControls /></TitleRight>
      </TitleBar>
      <Toolbar><ToolIcons /></Toolbar>
      <FilterRow>
        Zeige Transaktionen für:
        <FilterSelect>Letzte 7 Tage<SelectCaret /></FilterSelect>
      </FilterRow>

      <ChartStack>
        <MainChart />
        <VolumeChart />
        <RsiChart />
        <StochChart />
        <MacdChart />
      </ChartStack>

      <TimeAxis viewBox="2 763 1598 26">
        {MONTHS.map(([x, label]) => (
          <AxisText key={label} x={x} y="779" textAnchor="middle">{label}</AxisText>
        ))}
      </TimeAxis>

      <Slider>
        <span />
        {SLIDER_LABELS.map(l => <SliderLabel key={l}>{l}</SliderLabel>)}
        <SliderArrow />
        <SliderArrow $right />
        <SliderHandle $left={1031} />
        <SliderHandle $left={1585} />
      </Slider>

      <QuotePanel>
        <QuoteTitle>
          <CollapseDot />
          <QuoteHeading>Kursnotierungsanzeige</QuoteHeading>
          <TitleRule />
          <svg width="26" height="14" viewBox="0 0 26 14">
            <circle cx="7" cy="7" r="5.500" fill="#888" />
            <path d="M3 5H11M5 3V10" stroke="#ddd" />
            <path d="M16 3L24 11M24 3L16 11" stroke="#8a4a42" strokeWidth="2.400" />
          </svg>
        </QuoteTitle>
        <HeaderRow>
          {['Finanzinstrument', 'Letztkurs', 'Veränderung', 'Geldkursvolumen', 'Geldkurs', 'Briefkurs', 'Briefkursvolumen', 'Position'].map(h => (
            <HeaderCell key={h}>{h}</HeaderCell>
          ))}
        </HeaderRow>
        <DataRow>
          <NameCell>EU<NameExchange>VENTURE</NameExchange></NameCell>
          <DataCell><Diamond />0.090</DataCell>
          <DataCell>+0.005</DataCell>
          <DataCell>2,000</DataCell>
          <DataCell><Diamond />0.090</DataCell>
          <DataCell $pr={12}>0.095<Diamond /></DataCell>
          <DataCell>35,000</DataCell>
          <DataCell $bg="#1f4e1f" />
        </DataRow>
      </QuotePanel>

      <WindowEdge />

      <Taskbar>
        <WindowTabs>
          <WindowTab $w={10} />
          <WindowTab $w={112}>Classic Trading</WindowTab>
          <WindowTab $w={63}>Mosaic</WindowTab>
          <WindowTab $w={16} />
        </WindowTabs>
        <TaskSlot $w={44}><WindowsLogo /></TaskSlot>
        <TaskSlot $w={68}><OfficeLogo /></TaskSlot>
        <TaskSlot $w={58}><HelpLogo /></TaskSlot>
        <TaskSlot $w={64}><StoreLogo /></TaskSlot>
        <TaskSlot $w={62}><IeLogo /></TaskSlot>
        <TaskSlot $w={64}><FolderLogo /></TaskSlot>
        <TaskSlot $w={58} $state="open"><FirefoxLogo /></TaskSlot>
        <TaskSlot $w={50} $state="active" $ml={4}><BrokerLogo /></TaskSlot>
        <StackEdge />
        <TaskSlot $w={57} $state="open" $ml={8}><CheckLogo /></TaskSlot>
        <Tray>
          <TrayIcon $w={10} viewBox="0 0 10 16"><path d="M0 11L5 6L10 11Z" fill="#fff" /></TrayIcon>
          <TrayIcon $w={16} viewBox="0 0 16 16"><path d="M0 11H2V14H0ZM3.500 9H5.500V14H3.500ZM7 6H9V14H7ZM10.500 4H12.500V14H10.500ZM14 1H16V14H14Z" fill="#fff" /></TrayIcon>
          <TrayIcon $w={16} viewBox="0 0 16 16"><path d="M1 1V16" stroke="#fff" /><path d="M2 2C6 1 9 4 15 3L12 6L15 9C9 10 6 7 2 8Z" fill="#fff" /></TrayIcon>
          <TrayIcon $w={16} viewBox="0 0 16 16">
            <path d="M1 0V4M4 0V4M0 4H5V8H3V16H2V8H0Z" fill="#fff" />
            <rect x="7.500" y="2" width="8" height="14" fill="none" stroke="#fff" strokeWidth="1.200" />
            <rect x="9.500" y="4" width="4" height="10" fill="#fff" />
          </TrayIcon>
          <TrayIcon $w={16} viewBox="0 0 16 16">
            <path d="M0 5H3L8 1V13L3 9H0Z" fill="#fff" />
            <circle cx="11.500" cy="11" r="4" fill="#fff" />
            <circle cx="11.500" cy="11" r="3" fill="#d81818" />
            <path d="M9.500 13L13.500 9" stroke="#fff" />
          </TrayIcon>
          <Clock>
            <span>21:17</span>
            <span>17.08.2018</span>
          </Clock>
        </Tray>
      </Taskbar>

      <Ellipse viewBox="0 0 220 46">
        <path d="M12 22C14 11 44 1 118 -1C172 -2 210 8 211 20C212 31 160 39 104 39C50 39 8 34 12 22Z" fill="none" stroke="#ea1228" strokeWidth="5" />
      </Ellipse>
      <Scribble viewBox="0 0 82 46">
        <path d="M2 6C20 2 50 2 78 1M4 12L80 6M2 18L82 12M6 24L80 20M2 30L76 26M14 36L78 32M20 42L74 38M70 4L20 40M40 2L8 30" fill="none" stroke="#000" strokeWidth="7" strokeLinecap="round" />
      </Scribble>
    </Page>
  </>
);

export default App;
